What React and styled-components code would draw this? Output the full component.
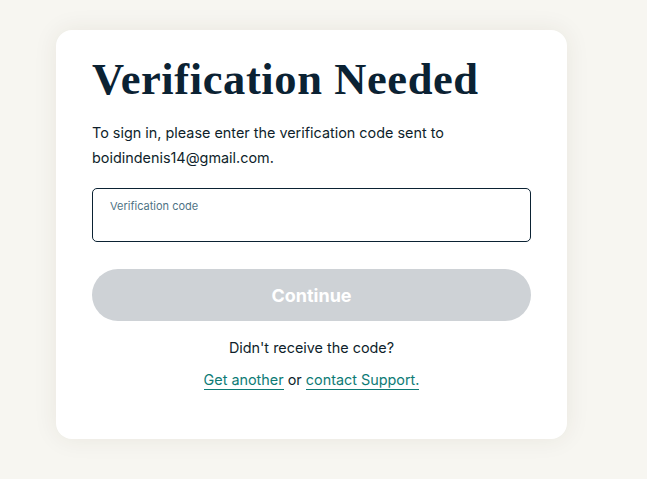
import React from 'react';
import styled, { createGlobalStyle } from 'styled-components';

const GlobalStyle = createGlobalStyle`
  html, body {
    margin: 0;
    padding: 0;
    background: #f7f6f1;
  }
  body {
    font-family: Inter, "Noto Sans", sans-serif;
  }
`;

const Page = styled.div`
  width: 647px;
  height: 479px;
  box-sizing: border-box;
  padding: 30px 0 0 56px;
  overflow: hidden;
`;

const Card = styled.div`
  width: 511px;
  height: 409px;
  box-sizing: border-box;
  background: #ffffff;
  border-radius: 16px;
  box-shadow: 0 0 24px rgba(60, 50, 30, 0.08);
  padding: 24px 36px 0;
  display: flex;
  flex-direction: column;
`;

const Title = styled.h1`
  margin: 0;
  font-family: "Liberation Serif", "Times New Roman", serif;
  font-weight: 700;
  font-size: 44.5px;
  line-height: 50px;
  letter-spacing: 0.6px;
  color: #0b2233;
`;

const Intro = styled.p`
  margin: 16px 0 0;
  font-size: 14.4px;
  line-height: 25px;
  color: #0f1f2c;
`;

const Field = styled.label`
  margin-top: 18px;
  height: 54px;
  box-sizing: border-box;
  border: 1px solid #0b2233;
  border-radius: 5px;
  padding: 10px 17px 0;
  display: flex;
  flex-direction: column;
`;

const FieldLabel = styled.span`
  font-size: 11px;
  line-height: 14px;
  color: #4f7385;
`;

const FieldInput = styled.input`
  border: none;
  outline: none;
  padding: 0;
  margin-top: 4px;
  font-family: inherit;
  font-size: 14px;
  background: transparent;
`;

const Button = styled.button`
  margin-top: 27px;
  height: 52px;
  border: none;
  border-radius: 26px;
  background: #ced2d6;
  color: #ffffff;
  font-family: Inter, sans-serif;
  font-weight: 700;
  font-size: 18px;
`;

const Note = styled.p`
  margin: 17px 0 0;
  text-align: center;
  font-size: 14.4px;
  line-height: 20px;
  color: #0f1f2c;
`;

const Links = styled(Note)`
  margin-top: 12px;
`;

const Link = styled.a`
  color: #0e7b76;
  text-decoration: none;
  border-bottom: 1px solid #0e7b76;
  padding-bottom: 1px;
`;

export default function App() {
  return (
    <>
      <GlobalStyle />
      <Page>
        <Card>
          <Title>Verification Needed</Title>
          <Intro>
            To sign in, please enter the verification code sent to
            <br />
            boidindenis14@gmail.com.
          </Intro>
          <Field>
            <FieldLabel>Verification code</FieldLabel>
            <FieldInput type="text" />
          </Field>
          <Button>Continue</Button>
          <Note>Didn't receive the code?</Note>
          <Links>
            <Link href="#">Get another</Link> or <Link href="#">contact Support.</Link>
          </Links>
        </Card>
      </Page>
    </>
  );
}
